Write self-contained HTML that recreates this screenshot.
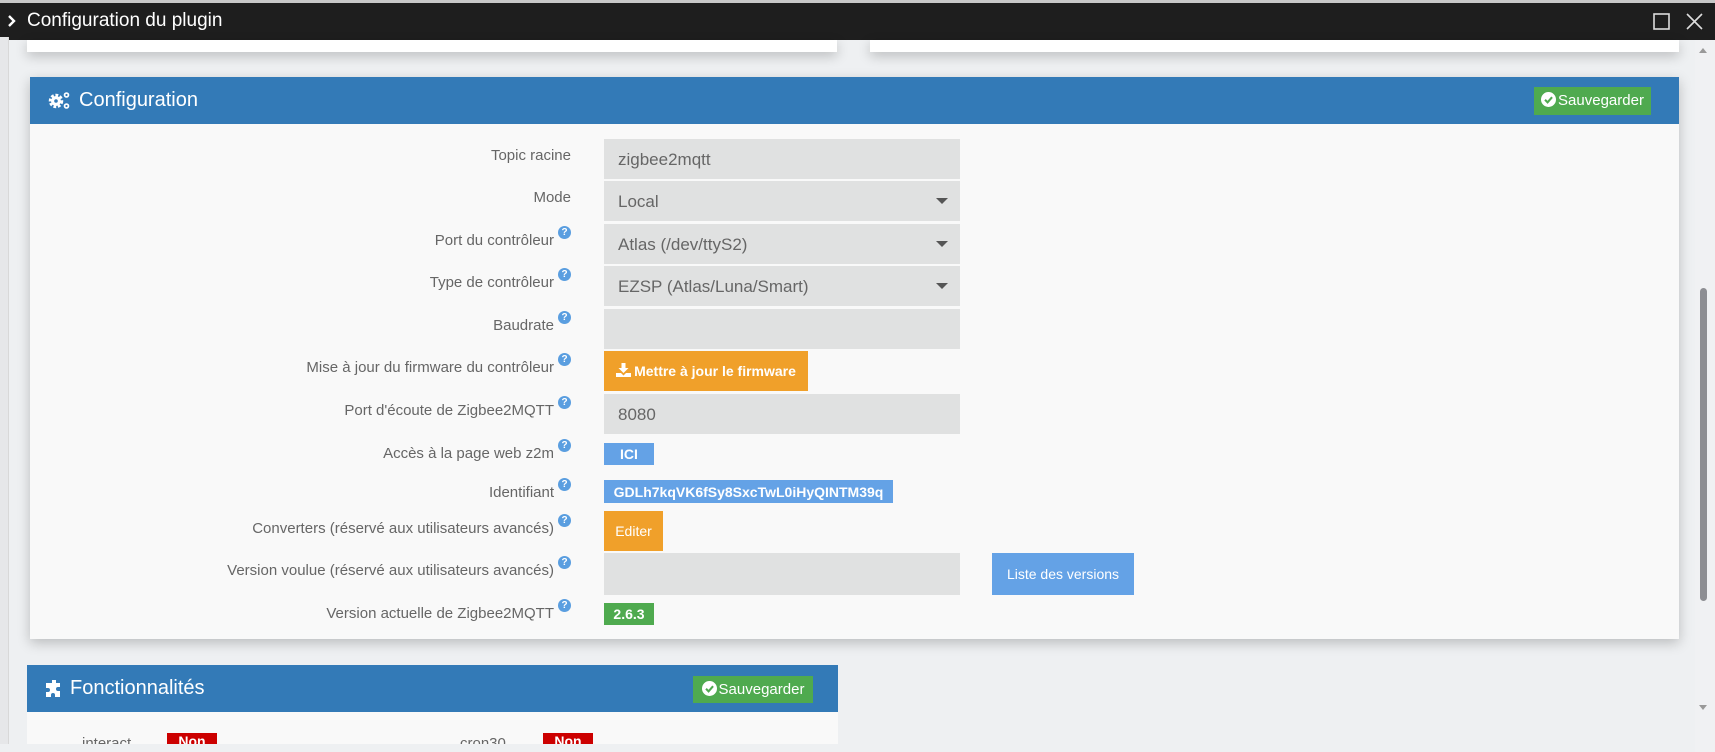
<!DOCTYPE html>
<html><head><meta charset="utf-8"><style>
*{box-sizing:border-box;margin:0;padding:0}
body{width:1715px;height:752px;overflow:hidden;background:#eef0f2;font-family:"Liberation Sans",Arial,sans-serif;position:relative}
.abs{position:absolute}
.title{left:0;top:0;width:1715px;height:40px;background:#1e1e1e;border-top:3px solid #c8c8c8;color:#fff}
.title span{position:absolute;left:27px;top:7px;font-size:19px}
.panel{background:#f9f9f9;box-shadow:0 4px 12px rgba(0,0,0,.22)}
.head{background:#337ab7;color:#fff;font-size:20px}
.lbl{position:absolute;right:1144px;font-size:15px;color:#666;text-align:right;white-space:nowrap}
.q{display:inline-block;width:13px;height:13px;border-radius:50%;background:#5a9ee0;color:#fff;font-size:10px;font-weight:bold;text-align:center;line-height:13px;vertical-align:top;margin-left:4px;position:relative;top:-6px}
.inp{position:absolute;left:604px;width:356px;height:40px;background:#e0e1e1;color:#666;font-size:17px;padding:11px 0 0 14px}
.caret{position:absolute;right:12px;top:17px;width:0;height:0;border-left:6px solid transparent;border-right:6px solid transparent;border-top:6px solid #555}
.badge{position:absolute;left:604px;color:#fff;font-weight:bold;font-size:14px;text-align:center}
.btn{position:absolute;color:#fff;font-size:14px;text-align:center}
.sv{background:#4faa4f;color:#fff;font-size:15px;padding:5px 0 0 0;text-align:center}
.sv svg{vertical-align:-2px;margin-right:2px}
</style></head><body>
<div class="abs title"><svg class="abs" style="left:7px;top:11px" width="10" height="14"><path d="M2 2 L7 7 L2 12" stroke="#fff" stroke-width="2.4" fill="none"/></svg><span>Configuration du plugin</span>
<svg class="abs" style="left:1653px;top:10px" width="17" height="17"><rect x="1" y="1" width="15" height="15" fill="none" stroke="#ddd" stroke-width="1.6"/></svg>
<svg class="abs" style="left:1686px;top:10px" width="17" height="17"><path d="M1 1L16 16M16 1L1 16" stroke="#ddd" stroke-width="1.6"/></svg></div>
<div class="abs" style="left:0;top:37px;width:9px;height:715px;background:#e6e7e9;border-right:1px solid #d8d8d8"></div>
<div class="abs panel" style="left:27px;top:40px;width:810px;height:12px;background:#fff"></div>
<div class="abs panel" style="left:870px;top:40px;width:809px;height:12px;background:#fff"></div>
<div class="abs panel" style="left:30px;top:77px;width:1649px;height:562px">
 <div class="head" style="height:47px;position:relative">
  <svg class="abs" style="left:18px;top:13px" width="24" height="21" viewBox="0 0 24 21"><circle cx="8" cy="11" r="5.5" fill="none" stroke="#fff" stroke-width="3.5" stroke-dasharray="2.6 1.6"/><circle cx="8" cy="11" r="5" fill="#fff"/><circle cx="8" cy="11" r="1.8" fill="#337ab7"/><circle cx="18.5" cy="5" r="2.8" fill="#fff"/><circle cx="18.5" cy="5" r="1.1" fill="#337ab7"/><circle cx="18.5" cy="16" r="2.8" fill="#fff"/><circle cx="18.5" cy="16" r="1.1" fill="#337ab7"/></svg>
  <span class="abs" style="left:49px;top:12px">Configuration</span>
  <div class="abs sv" style="left:1504px;top:10px;width:117px;height:28px"><svg width="15" height="15" viewBox="0 0 16 16"><circle cx="8" cy="8" r="8" fill="#fff"/><path d="M4.3 8.3L7 11L11.8 5.5" stroke="#4faa4f" stroke-width="2.2" fill="none"/></svg>Sauvegarder</div>
 </div>
</div>
<div class="abs" style="left:0;top:0;width:1715px;height:752px">
<div class="lbl" style="top:147px">Topic racine</div>
<div class="inp" style="top:139px">zigbee2mqtt</div>
<div class="lbl" style="top:189px">Mode</div>
<div class="inp" style="top:181px">Local<div class="caret"></div></div>
<div class="lbl" style="top:232px">Port du contrôleur<span class="q">?</span></div>
<div class="inp" style="top:224px">Atlas (/dev/ttyS2)<div class="caret"></div></div>
<div class="lbl" style="top:274px">Type de contrôleur<span class="q">?</span></div>
<div class="inp" style="top:266px">EZSP (Atlas/Luna/Smart)<div class="caret"></div></div>
<div class="lbl" style="top:317px">Baudrate<span class="q">?</span></div>
<div class="inp" style="top:309px"></div>
<div class="lbl" style="top:359px">Mise à jour du firmware du contrôleur<span class="q">?</span></div>
<div class="btn" style="left:604px;top:351px;width:204px;height:40px;background:#f0a02a;padding-top:12px;font-weight:bold"><svg width="15" height="14" viewBox="0 0 15 14" style="vertical-align:-1px;margin-right:3px"><path d="M5.5 0h4v5h3l-5 5l-5-5h3z" fill="#fff"/><path d="M0 10h5l2.5 2.5L10 10h5v4H0z" fill="#fff"/></svg>Mettre à jour le firmware</div>
<div class="lbl" style="top:402px">Port d'écoute de Zigbee2MQTT<span class="q">?</span></div>
<div class="inp" style="top:394px">8080</div>
<div class="lbl" style="top:445px">Accès à la page web z2m<span class="q">?</span></div>
<div class="badge" style="top:443px;width:50px;height:22px;background:#64a2e6;padding-top:3px">ICI</div>
<div class="lbl" style="top:484px">Identifiant<span class="q">?</span></div>
<div class="badge" style="top:480px;width:289px;height:23px;background:#64a2e6;padding-top:4px">GDLh7kqVK6fSy8SxcTwL0iHyQINTM39q</div>
<div class="lbl" style="top:520px">Converters (réservé aux utilisateurs avancés)<span class="q">?</span></div>
<div class="btn" style="left:604px;top:511px;width:59px;height:40px;background:#f0a02a;padding-top:12px">Editer</div>
<div class="lbl" style="top:562px">Version voulue (réservé aux utilisateurs avancés)<span class="q">?</span></div>
<div class="inp" style="top:553px;height:42px"></div>
<div class="btn" style="left:992px;top:553px;width:142px;height:42px;background:#64a2e6;padding-top:13px">Liste des versions</div>
<div class="lbl" style="top:605px">Version actuelle de Zigbee2MQTT<span class="q">?</span></div>
<div class="badge" style="top:603px;width:50px;height:22px;background:#4faa4f;padding-top:3px">2.6.3</div>
</div>
<div class="abs" style="left:27px;top:665px;width:811px;height:79px;background:#f9f9f9">
 <div class="head" style="height:47px;position:relative">
  <svg class="abs" style="left:18px;top:14px" width="19" height="19" viewBox="0 0 19 19"><path d="M7 1h4v3a2 2 0 1 0 0 0h4v4h-2a2 2 0 1 0 0 4h2v6h-5v-2a2 2 0 1 0-4 0v2H1v-5h2a2 2 0 1 0 0-4H1V4h6z" fill="#fff"/></svg>
  <span class="abs" style="left:43px;top:12px">Fonctionnalités</span>
  <div class="abs sv" style="left:666px;top:11px;width:120px;height:27px"><svg width="15" height="15" viewBox="0 0 16 16"><circle cx="8" cy="8" r="8" fill="#fff"/><path d="M4.3 8.3L7 11L11.8 5.5" stroke="#4faa4f" stroke-width="2.2" fill="none"/></svg>Sauvegarder</div>
 </div>
 <span class="abs" style="left:55px;top:70px;font-size:15px;color:#666">interact</span>
 <div class="abs" style="left:140px;top:68px;width:50px;height:14px;background:#c00;color:#fff;font-weight:bold;font-size:14px;text-align:center">Non</div>
 <span class="abs" style="left:433px;top:70px;font-size:15px;color:#666">cron30</span>
 <div class="abs" style="left:516px;top:68px;width:50px;height:14px;background:#c00;color:#fff;font-weight:bold;font-size:14px;text-align:center">Non</div>
</div>
<div class="abs" style="left:0;top:744px;width:1695px;height:8px;background:#eef0f2"></div>
<div class="abs" style="left:1695px;top:40px;width:20px;height:712px;background:#f0f1f3"></div>
<div class="abs" style="left:1700px;top:288px;width:7px;height:313px;background:#8d8e93;border-radius:4px"></div>
<div class="abs" style="left:1699px;top:48px;width:0;height:0;border-left:4px solid transparent;border-right:4px solid transparent;border-bottom:5px solid #999"></div>
<div class="abs" style="left:1699px;top:705px;width:0;height:0;border-left:4px solid transparent;border-right:4px solid transparent;border-top:5px solid #999"></div>
</body></html>
